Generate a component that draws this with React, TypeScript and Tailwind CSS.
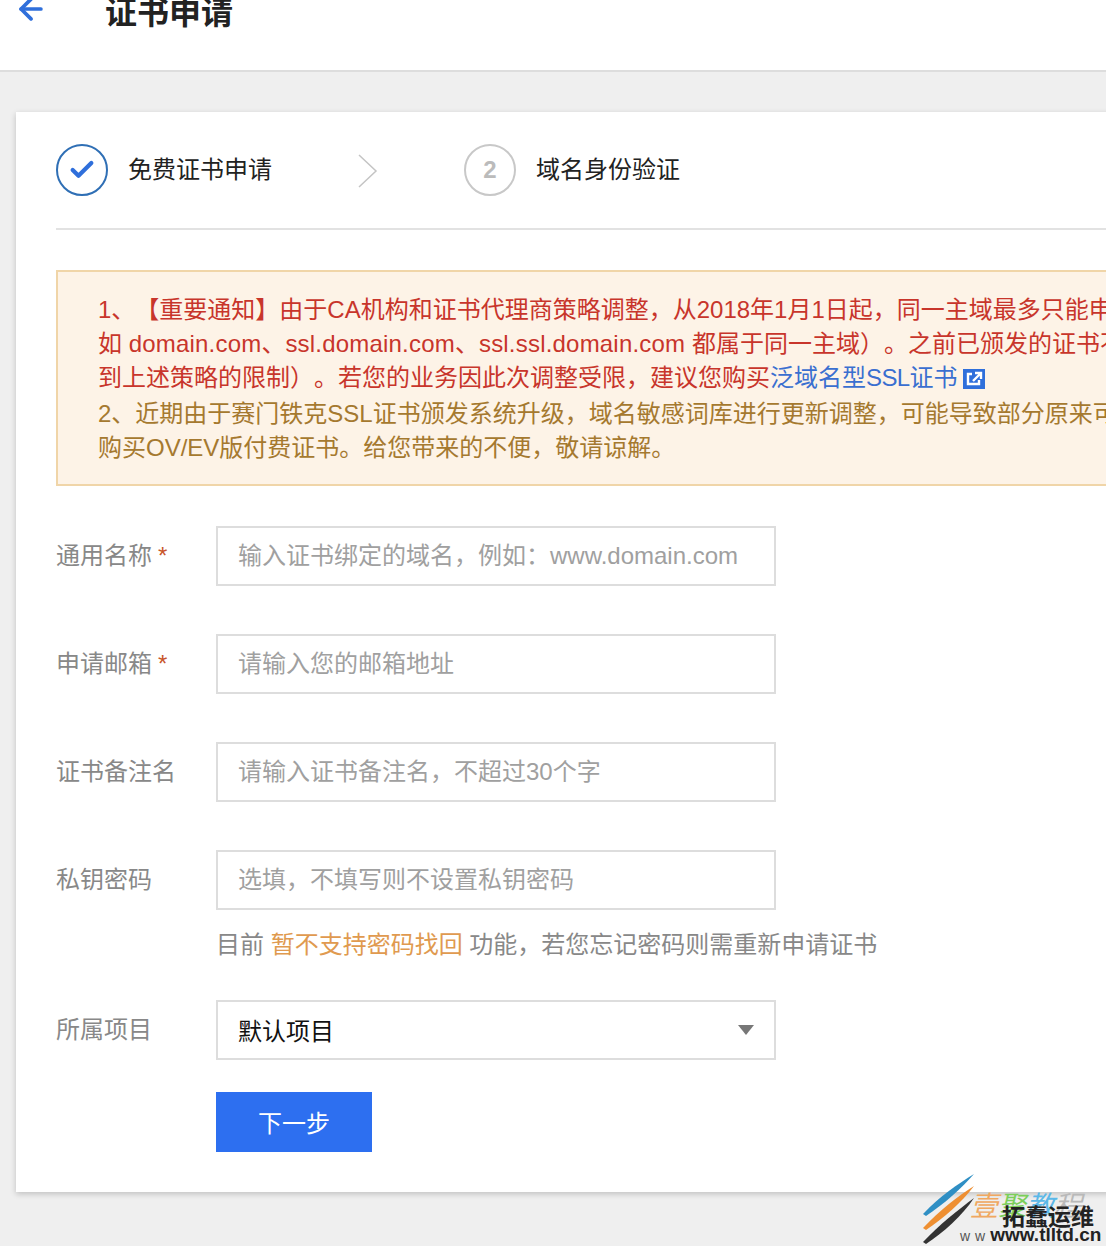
import { ArrowLeft, Check } from 'lucide-react';

const fields = [
  { label: '通用名称', required: true, placeholder: '输入证书绑定的域名，例如：www.domain.com' },
  { label: '申请邮箱', required: true, placeholder: '请输入您的邮箱地址' },
  { label: '证书备注名', required: false, placeholder: '请输入证书备注名，不超过30个字' },
  { label: '私钥密码', required: false, placeholder: '选填，不填写则不设置私钥密码' },
];

function Watermark() {
  return (
    <div className="absolute left-[920px] top-[1172px] h-[74px] w-[186px] overflow-hidden">
      <svg className="absolute left-0 top-0" width="70" height="74" viewBox="0 0 70 74">
        <path d="M3 42 C20 24 38 12 54 2 C42 16 24 32 6 44 Z" fill="#2f8fc4" />
        <path d="M3 56 C20 38 38 24 54 14 C42 30 24 46 6 58 Z" fill="#ee8f32" />
        <path d="M3 70 C20 52 38 38 54 26 C42 44 24 60 6 72 Z" fill="#333333" />
      </svg>
      <div className="absolute left-[50px] top-[20px] flex whitespace-nowrap text-[28px] italic leading-[30px]">
        <span className="text-[#f0a860]">壹</span>
        <span className="text-[#7ccf5a]">聚</span>
        <span className="text-[#5bb8e8]">教</span>
        <span className="text-[#b9b9b9]">程</span>
      </div>
      <div className="absolute left-[82px] top-[32px] whitespace-nowrap text-[23px] font-bold leading-[26px] text-[#222]">
        拓蠢运维
      </div>
      <div className="absolute left-[40px] top-[53px] flex items-baseline whitespace-nowrap leading-[20px]">
        <span className="text-[14px] tracking-[5px] text-[#555]">ww</span>
        <span className="text-[19px] font-bold text-[#222]">www.tlltd.cn</span>
      </div>
    </div>
  );
}

export default function App() {
  return (
    <div className="relative h-[1246px] w-[1106px] overflow-hidden bg-[#efefef] font-['Liberation_Sans','Noto_Sans_CJK_SC',sans-serif] [text-spacing-trim:space-all]">
      {/* Header */}
      <header className="flex h-[72px] items-start border-b-2 border-[#dddddd] bg-white pl-[14px]">
        <ArrowLeft className="mt-[-8px] h-[34px] w-[34px] text-[#2f6fdb]" strokeWidth={2.6} />
        <h1 className="ml-[57px] mt-[-11px] text-[32px] font-semibold leading-[48px] text-[#222]">证书申请</h1>
      </header>

      {/* Card */}
      <main className="ml-[16px] mt-[40px] h-[1080px] w-[1300px] bg-white pl-[40px] pr-[120px] pt-[32px] shadow-[0_2px_6px_rgba(0,0,0,0.2)]">
        <div className="flex h-[86px] items-start border-b-2 border-[#e2e2e2]">
          <div className="flex h-[52px] w-[52px] items-center justify-center rounded-full border-2 border-[#2f6fb5]">
            <Check className="h-[28px] w-[28px] text-[#2f6fdb]" strokeWidth={3.6} />
          </div>
          <span className="ml-[20px] text-[24px] leading-[52px] text-[#222]">免费证书申请</span>
          <svg className="ml-[86px] mt-[10px]" width="20" height="34" viewBox="0 0 20 34">
            <path d="M1 1l17 16L1 33" fill="none" stroke="#c4c4c4" strokeWidth="1.5" />
          </svg>
          <div className="ml-[86px] flex h-[52px] w-[52px] items-center justify-center rounded-full border-2 border-[#c8c8c8] text-[24px] font-bold text-[#bbbbbb]">
            2
          </div>
          <span className="ml-[20px] text-[24px] leading-[52px] text-[#222]">域名身份验证</span>
        </div>

        {/* Notice */}
        <div className="mt-[40px] h-[216px] border-2 border-[#f0d5a8] bg-[#fdf3e7] pl-[40px] pt-[21px] text-[24px] leading-[34px] whitespace-nowrap">
          <div className="text-[#c8352b]">
            <p>1、【重要通知】由于CA机构和证书代理商策略调整，从2018年1月1日起，同一主域最多只能申请</p>
            <p>
              如 <span className="tracking-[0.2px]">domain.com</span>、<span className="tracking-[0.2px]">ssl.domain.com</span>、
              <span className="tracking-[0.2px]">ssl.ssl.domain.com</span> 都属于同一主域）。之前已颁发的证书不
            </p>
            <p className="flex items-center">
              到上述策略的限制）。若您的业务因此次调整受限，建议您购买
              <span className="text-[#3a6fd0]">泛域名型<span className="tracking-[-0.6px]">SSL</span>证书</span>
              <svg className="ml-[5px] mt-[2px]" width="22" height="20" viewBox="0 0 22 20">
                <rect width="22" height="20" fill="#2f6fdb" />
                <path d="M9 5H5v10h11v-4M12 4h6v6M18 4l-8 8" fill="none" stroke="#fff" strokeWidth="2.4" />
              </svg>
            </p>
          </div>
          <div className="mt-[2px] text-[#a5792f]">
            <p>2、近期由于赛门铁克SSL证书颁发系统升级，域名敏感词库进行更新调整，可能导致部分原来可</p>
            <p>购买OV/EV版付费证书。给您带来的不便，敬请谅解。</p>
          </div>
        </div>

        {/* Form */}
        <form className="mt-[40px] flex flex-col gap-[48px]">
          {fields.map((field) => (
            <div key={field.label} className="flex items-center">
              <label className="w-[160px] text-[24px] text-[#888888]">
                {field.label}
                {field.required && <span className="ml-[6px] text-[#c8552b]">*</span>}
              </label>
              <input
                className="h-[60px] w-[560px] border-2 border-[#dddddd] px-[20px] text-[24px] outline-none placeholder:text-[#a0a0a0]"
                placeholder={field.placeholder}
              />
            </div>
          ))}
          <div className="mt-[-31px] flex flex-col">
            <p className="ml-[160px] text-[24px] leading-[36px] text-[#888888]">
              目前 <span className="text-[#e09a4f]">暂不支持密码找回</span> 功能，若您忘记密码则需重新申请证书
            </p>
            <div className="mt-[37px] flex items-center">
              <label className="w-[160px] text-[24px] text-[#888888]">所属项目</label>
              <div className="flex h-[60px] w-[560px] items-center justify-between border-2 border-[#dddddd] px-[20px] text-[24px] text-[#111]">
                <span className="pt-[3px]">默认项目</span>
                <svg width="16" height="10" viewBox="0 0 16 10">
                  <path d="M0 0h16L8 10Z" fill="#777777" />
                </svg>
              </div>
            </div>
            <button
              type="button"
              className="ml-[160px] mt-[32px] h-[60px] w-[156px] bg-[#2d6ff0] pt-[3px] text-[24px] text-white"
            >
              下一步
            </button>
          </div>
        </form>
      </main>

      <Watermark />
    </div>
  );
}
